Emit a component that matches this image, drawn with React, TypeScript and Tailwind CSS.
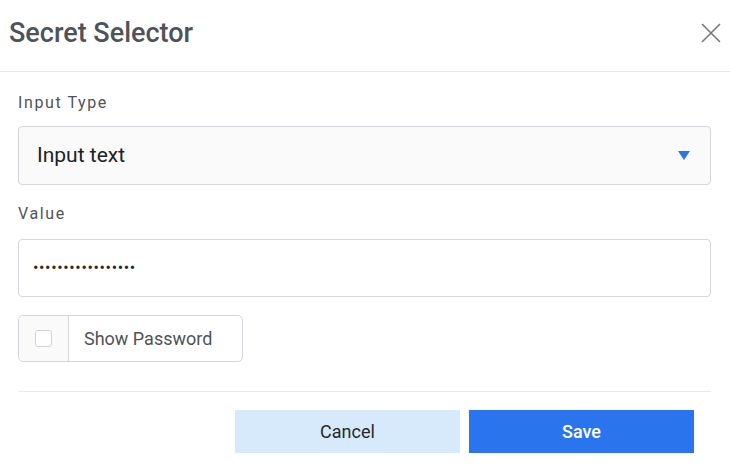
export default function App() {
  return (
    <div className="w-[730px] h-[466px] bg-white font-['Roboto',sans-serif] flex flex-col">
      {/* Header */}
      <div className="h-[72px] flex items-center justify-between pl-[9px] pr-[9px] border-b border-[#e6e7e8]">
        <h1 className="text-[27px] text-[#4f5358] font-medium pb-[4px]">Secret Selector</h1>
        <button className="w-[20px] h-[20px] mb-[6px] flex items-center justify-center">
          <svg width="20" height="20" viewBox="0 0 20 20" fill="none" stroke="#777" strokeWidth="1.6">
            <path d="M1 1 L19 19 M19 1 L1 19" />
          </svg>
        </button>
      </div>

      {/* Body */}
      <div className="flex flex-col px-[18px] pr-[19px]">
        <label className="mt-[20px] text-[16px] leading-[22px] text-[#505357] tracking-[1.6px]">Input Type</label>
        <div className="mt-[12px] h-[59px] rounded-[4px] border border-[#d3d6da] bg-[#fafafa] flex items-center justify-between pl-[18px] pr-[20px]">
          <span className="text-[21px] text-[#202124]">Input text</span>
          <svg width="12" height="9" viewBox="0 0 12 9">
            <path d="M0 0 H12 L6 9 Z" fill="#2b76eb" />
          </svg>
        </div>

        <label className="mt-[18px] text-[16px] leading-[22px] text-[#505357] tracking-[1.6px]">Value</label>
        <div className="mt-[14px] h-[58px] rounded-[4px] border border-[#d3d6da] bg-white flex items-center pl-[14px]">
          <span className="text-[16px] text-[#2a2a2a] tracking-[0.65px]">•••••••••••••••••</span>
        </div>

        <div className="mt-[18px] w-[225px] h-[47px] rounded-[5px] border border-[#d3d6da] flex items-stretch">
          <div className="w-[50px] border-r border-[#d3d6da] bg-[#fafafa] rounded-l-[5px] flex items-center justify-center">
            <span className="w-[17px] h-[17px] rounded-[3px] border border-[#cfd3d8] bg-white" />
          </div>
          <span className="flex items-center pl-[15px] text-[18px] text-[#505357]">Show Password</span>
        </div>

        <div className="mt-[29px] border-t border-[#e9eaeb]" />

        <div className="mt-[18px] flex justify-end gap-[9px] pr-[17px]">
          <button className="w-[225px] h-[43px] bg-[#d7eafb] text-[18px] text-[#26282b]">Cancel</button>
          <button className="w-[225px] h-[43px] bg-[#2a74ee] text-[18px] font-medium text-white">Save</button>
        </div>
      </div>
    </div>
  );
}
